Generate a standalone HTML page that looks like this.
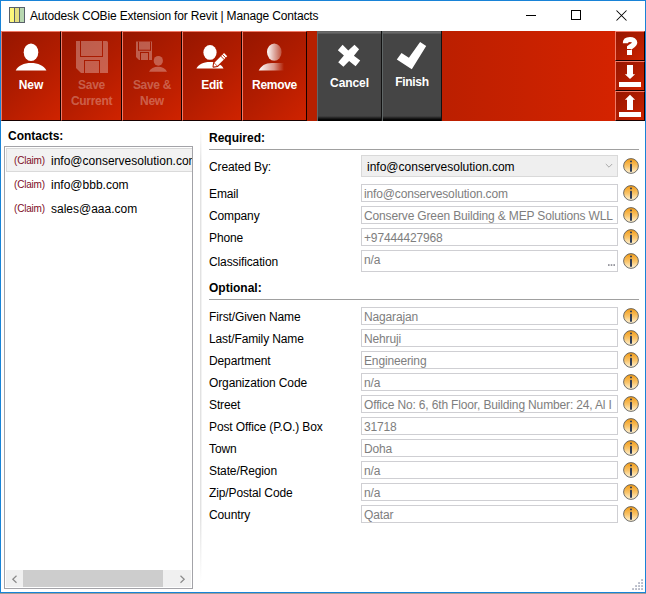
<!DOCTYPE html>
<html><head><meta charset="utf-8">
<style>
*{margin:0;padding:0;box-sizing:border-box}
html,body{width:646px;height:594px;overflow:hidden;background:#fff}
body{position:relative;font-family:"Liberation Sans",sans-serif;font-size:12px;color:#000}
.a{position:absolute}
.t{position:absolute;white-space:nowrap;line-height:16px;font-size:12px}
.b{font-weight:bold}
.rb{position:absolute;top:31px;height:90px;background:linear-gradient(135deg,#961600 0%,#b01c00 50%,#cf2300 100%);border-top:1px solid #f07a66;border-left:1px solid #f07a66;border-right:1px solid #160000;border-bottom:1px solid #160000}
.gb{position:absolute;top:31px;height:90px;background:linear-gradient(#5a5a5a 0px,#6a6a6a 1px,#6a6a6a 2px,#5a5a5a 2.5px,#454545 3.5px,#454545 85px,#202020 87px,#000 89px);border-left:1px solid #5f6666;border-right:1px solid #111}
.lbl{position:absolute;left:-2px;right:-2px;text-align:center;color:#fff;font-weight:bold;font-size:12px;line-height:16px;white-space:nowrap;letter-spacing:-0.3px}
.dis{color:rgba(255,255,255,0.3)}
.sb{position:absolute;left:615px;width:30px;height:30px;background:linear-gradient(135deg,#961600 0%,#b01c00 50%,#cf2300 100%);border-top:1px solid #f07a66;border-left:1px solid #f07a66;border-right:1px solid #160000;border-bottom:1px solid #160000}
.tb{position:absolute;left:361px;width:257px;height:18px;border:1px solid #cfcfd3;background:#fff;overflow:hidden}
.tv{position:absolute;left:2px;top:1px;line-height:16px;color:#7e7e7e;white-space:nowrap;font-size:12px;letter-spacing:-0.15px}
.lb{position:absolute;left:209px;white-space:nowrap;line-height:16px;font-size:12px;letter-spacing:-0.12px}
.inf{position:absolute;left:623px;width:16px;height:16px}
.li{position:absolute;left:0;height:24px;width:200px}
.cl{position:absolute;left:9px;color:#7e0e1e;font-size:10px;line-height:12px;white-space:nowrap;letter-spacing:-0.2px}
.em{position:absolute;left:46px;font-size:12px;line-height:16px;white-space:nowrap}
</style></head><body>
<svg width="0" height="0" style="position:absolute">
 <defs>
  <linearGradient id="ig" x1="0" y1="0" x2="0" y2="1">
   <stop offset="0" stop-color="#f39a12"/><stop offset="0.55" stop-color="#f9c66e"/><stop offset="1" stop-color="#fff6dc"/>
  </linearGradient>
  <linearGradient id="rg" x1="0" y1="0" x2="1" y2="0">
   <stop offset="0" stop-color="#fff" stop-opacity="1"/><stop offset="1" stop-color="#fff" stop-opacity="0.25"/>
  </linearGradient>
  <linearGradient id="rg2" x1="0" y1="0" x2="1" y2="0">
   <stop offset="0" stop-color="#fff" stop-opacity="1"/><stop offset="0.6" stop-color="#fff" stop-opacity="0.55"/><stop offset="1" stop-color="#fff" stop-opacity="0"/>
  </linearGradient>
  <symbol id="info" viewBox="0 0 16 16">
   <circle cx="8" cy="8" r="7.4" fill="url(#ig)" stroke="#5d5d5d" stroke-width="0.9"/>
   <rect x="7" y="2.6" width="2" height="1.8" rx="0.8" fill="#2e3b55"/>
   <rect x="7" y="5.7" width="2" height="8" rx="0.5" fill="#2e3b55"/>
  </symbol>
 </defs>
</svg>
<div class="a" style="left:0;top:0;width:646px;height:593px;border:1px solid #1883d7"></div>
<div class="a" style="left:0;top:593px;width:646px;height:1px;background:#a39d97"></div>

<!-- title bar -->
<svg class="a" style="left:9px;top:7px" width="16" height="16" viewBox="0 0 16 16">
  <rect x="0.5" y="0.5" width="15" height="15" fill="#fdf77a" stroke="#59606a"/>
  <rect x="5.5" y="0.5" width="5" height="15" fill="#e6df80" stroke="#59606a"/>
  <rect x="10.5" y="0.5" width="5" height="15" fill="#b8d8b0" stroke="#59606a"/>
</svg>
<div class="t" style="left:30px;top:8px;letter-spacing:-0.16px">Autodesk COBie Extension for Revit | Manage Contacts</div>
<div class="a" style="left:526px;top:15px;width:10px;height:1px;background:#000"></div>
<div class="a" style="left:571px;top:10px;width:10px;height:10px;border:1px solid #000"></div>
<svg class="a" style="left:616px;top:10px" width="11" height="11" viewBox="0 0 11 11"><path d="M0.5 0.5L10.5 10.5M10.5 0.5L0.5 10.5" stroke="#000" stroke-width="1.05"/></svg>

<!-- toolbar -->
<div class="a" style="left:1px;top:31px;width:644px;height:90px;background:linear-gradient(90deg,#bb1f00 0px,#bb1f00 440px,#d42300 614px)"></div>
<div class="a" style="left:307px;top:31px;width:10px;height:90px;background:#b52000"></div>

<div class="rb" style="left:1px;width:60px"><div class="lbl" style="top:45px;letter-spacing:0">New</div></div>
<div class="rb" style="left:61px;width:61px"><div class="lbl dis" style="top:45px">Save<br>Current</div></div>
<div class="rb" style="left:122px;width:60px"><div class="lbl dis" style="top:45px">Save &amp;<br>New</div></div>
<div class="rb" style="left:182px;width:60px"><div class="lbl" style="top:45px">Edit</div></div>
<div class="rb" style="left:242px;width:65px"><div class="lbl" style="top:45px">Remove</div></div>
<div class="gb" style="left:317px;width:65px"><div class="lbl" style="top:44px;letter-spacing:-0.1px">Cancel</div></div>
<div class="gb" style="left:382px;width:60px"><div class="lbl" style="top:43px">Finish</div></div>

<div class="sb" style="top:31px"></div>
<div class="sb" style="top:61px"></div>
<div class="sb" style="top:91px"></div>

<svg class="a" style="left:0;top:0" width="646" height="125" viewBox="0 0 646 125">
 <!-- New -->
 <ellipse cx="31" cy="52.2" rx="7.3" ry="8.8" fill="#fff"/>
 <path d="M15.7 70.5C18 65.5 24 63 31 63C38 63 44 65.5 46.4 70.5Z" fill="#fff"/>
 <!-- Save Current floppy -->
 <mask id="fm1" maskUnits="userSpaceOnUse" x="70" y="35" width="45" height="45">
  <path d="M76 41H106.5Q108 41 108 42.5V73H81L76 68Z" fill="#fff"/>
  <rect x="80" y="41" width="1" height="16" fill="#000"/>
  <rect x="102" y="41" width="1" height="16" fill="#000"/>
  <rect x="80" y="56" width="23" height="1" fill="#000"/>
  <rect x="84" y="60" width="1" height="13" fill="#000"/>
  <rect x="99" y="60" width="1" height="13" fill="#000"/>
  <rect x="84" y="60" width="16" height="1" fill="#000"/>
 </mask>
 <rect x="70" y="35" width="45" height="45" fill="#fff" fill-opacity="0.3" mask="url(#fm1)"/>
 <!-- Save & New -->
 <mask id="fm2" maskUnits="userSpaceOnUse" x="130" y="35" width="45" height="45">
  <path d="M136 41.6H152V60H139L136 57Z" fill="#fff"/>
  <rect x="138" y="41.6" width="1" height="8.9" fill="#000"/>
  <rect x="150" y="41.6" width="1" height="8.9" fill="#000"/>
  <rect x="138" y="49.7" width="13" height="1" fill="#000"/>
  <rect x="140" y="52" width="1" height="8" fill="#000"/>
  <rect x="148" y="52" width="1" height="8" fill="#000"/>
  <rect x="140" y="52" width="9" height="1" fill="#000"/>
 </mask>
 <rect x="130" y="35" width="45" height="45" fill="#fff" fill-opacity="0.3" mask="url(#fm2)"/>
 <ellipse cx="158.3" cy="60.8" rx="4.6" ry="4.9" fill="#fff" fill-opacity="0.3"/>
 <path d="M149 71.7C150.5 68.5 154 66.7 158 66.7C162 66.7 165.5 68.5 167 71.7Z" fill="#fff" fill-opacity="0.3"/>
 <!-- Edit -->
 <ellipse cx="210" cy="52.4" rx="6.6" ry="7.4" fill="#fff"/>
 <path d="M196.4 68.5C198.5 64.5 203 62 210 62C217 62 221.5 64.5 223.5 68.5Z" fill="#fff"/>
 <path d="M213.6 66.6 L214.17 62.92 L224.07 53.02 L227.18 56.13 L217.28 66.03Z" fill="none" stroke="#b31d00" stroke-width="2.2" stroke-linejoin="round"/>
 <path d="M213.6 66.6 L214.17 62.92 L224.07 53.02 L227.18 56.13 L217.28 66.03Z" fill="#fff"/>
 <path d="M220.67 55.99L224.21 59.53 M222.3 54.37L225.83 57.9" stroke="#b81e00" stroke-width="0.9"/>
 <path d="M214.17 62.92L217.28 66.03" stroke="#b51e00" stroke-width="0.7"/>
 <!-- Remove -->
 <ellipse cx="274.3" cy="52.1" rx="7.3" ry="8.7" fill="url(#rg)"/>
 <path d="M258.7 70.5C261 66 265 63 272 63H284V70.5Z" fill="url(#rg2)"/>
 <!-- Cancel X -->
 <path d="M342.6 44.8L348.25 50.6L354.5 44.8L359.1 49.2L353.9 55.7L360.2 60.6L355.6 66.3L349.1 60.9L343.4 66.8L338.2 62.2L343.9 55.4L337.85 50.3Z" fill="#fff"/>
 <!-- Finish check -->
 <path d="M401.5 53L408.9 57.7L420.1 42L426.2 45.9L411.8 69.2L396.8 59.5Z" fill="#fff"/>
 <!-- help ? -->
 <path d="M625.4 43.3C625.4 40.3 627.5 39.5 630 39.5C632.8 39.5 634.7 40.8 634.7 42.6C634.7 45 632 45.8 629.6 47.6V49" fill="none" stroke="#fff" stroke-width="5.2"/>
 <rect x="627" y="50" width="5" height="5" fill="#fff"/>
 <!-- download -->
 <path d="M627 65H633V74.2H635.1L630 79L624.9 74.2H627Z" fill="#fff"/>
 <rect x="619" y="82" width="22" height="5" fill="#fff"/>
 <!-- upload -->
 <path d="M630 94.8L635.1 99.8H633V110H627V99.8H624.9Z" fill="#fff"/>
 <rect x="619" y="112" width="22" height="5" fill="#fff"/>
</svg>

<!-- left panel -->
<div class="t b" style="left:8px;top:128px">Contacts:</div>
<div class="a" style="left:4px;top:146px;width:189px;height:443px;border:1px solid #a3a3a8;overflow:hidden">
 <div class="a" style="left:1px;top:1px;width:200px;height:24px;border:1px solid #dadada;background:#f2f2f2"></div>
 <div class="cl" style="top:8px">(Claim)</div><div class="em" style="top:6px">info@conservesolution.com</div>
 <div class="cl" style="top:32px">(Claim)</div><div class="em" style="top:30px">info@bbb.com</div>
 <div class="cl" style="top:56px">(Claim)</div><div class="em" style="top:54px">sales@aaa.com</div>
 <div class="a" style="left:1px;top:423px;width:185px;height:17px;background:#f0f0f0"></div>
 <div class="a" style="left:18px;top:423px;width:140px;height:17px;background:#cdcdcd"></div>
 <svg class="a" style="left:6px;top:428px" width="8" height="9" viewBox="0 0 8 9"><path d="M5.5 0.7L1.8 4.2L5.5 7.7" fill="none" stroke="#8a8a8a" stroke-width="1.2"/></svg>
 <svg class="a" style="left:174px;top:428px" width="8" height="9" viewBox="0 0 8 9"><path d="M1.5 0.7L5.2 4.2L1.5 7.7" fill="none" stroke="#8a8a8a" stroke-width="1.2"/></svg>
</div>
<div class="a" style="left:200px;top:128px;width:1px;height:455px;background:linear-gradient(#fff,#e2e2e2 8%,#e2e2e2 85%,#fff)"></div>
<div class="a" style="left:201px;top:128px;width:1px;height:455px;background:linear-gradient(#fff,#f2f2f2 8%,#f2f2f2 85%,#fff)"></div>

<!-- right panel -->
<div class="t b" style="left:209px;top:130px">Required:</div>
<div class="a" style="left:209px;top:149px;width:430px;height:1px;background:#a0a0a0"></div>
<div class="t b" style="left:209px;top:280px">Optional:</div>
<div class="a" style="left:209px;top:299px;width:430px;height:1px;background:#a0a0a0"></div>

<div class="lb" style="top:159px">Created By:</div>
<div class="a" style="left:361px;top:155px;width:257px;height:22px;border:1px solid #d9d9d9;background:#efefef"></div>
<div class="t" style="left:367px;top:159px">info@conservesolution.com</div>
<svg class="a" style="left:605px;top:163px" width="8" height="6" viewBox="0 0 8 6"><path d="M0.8 1L4 4.2L7.2 1" fill="none" stroke="#a8a8a8" stroke-width="1"/></svg>
<svg class="inf" style="top:158px" viewBox="0 0 16 16"><use href="#info"/></svg>
<div class="lb" style="top:186px">Email</div>
<div class="tb" style="top:184px;height:18px"><div class="tv">info@conservesolution.com</div></div>
<svg class="inf" style="top:185px" viewBox="0 0 16 16"><use href="#info"/></svg>
<div class="lb" style="top:208px">Company</div>
<div class="tb" style="top:206px;height:18px"><div class="tv">Conserve Green Building &amp; MEP Solutions WLL</div></div>
<svg class="inf" style="top:207px" viewBox="0 0 16 16"><use href="#info"/></svg>
<div class="lb" style="top:230px">Phone</div>
<div class="tb" style="top:228px;height:18px"><div class="tv">+97444427968</div></div>
<svg class="inf" style="top:229px" viewBox="0 0 16 16"><use href="#info"/></svg>
<div class="lb" style="top:254px">Classification</div>
<div class="tb" style="top:250px;height:22px"><div class="tv">n/a</div></div>
<svg class="inf" style="top:253px" viewBox="0 0 16 16"><use href="#info"/></svg>
<div class="lb" style="top:309px">First/Given Name</div>
<div class="tb" style="top:307px;height:18px"><div class="tv">Nagarajan</div></div>
<svg class="inf" style="top:308px" viewBox="0 0 16 16"><use href="#info"/></svg>
<div class="lb" style="top:331px">Last/Family Name</div>
<div class="tb" style="top:329px;height:18px"><div class="tv">Nehruji</div></div>
<svg class="inf" style="top:330px" viewBox="0 0 16 16"><use href="#info"/></svg>
<div class="lb" style="top:353px">Department</div>
<div class="tb" style="top:351px;height:18px"><div class="tv">Engineering</div></div>
<svg class="inf" style="top:352px" viewBox="0 0 16 16"><use href="#info"/></svg>
<div class="lb" style="top:375px">Organization Code</div>
<div class="tb" style="top:373px;height:18px"><div class="tv">n/a</div></div>
<svg class="inf" style="top:374px" viewBox="0 0 16 16"><use href="#info"/></svg>
<div class="lb" style="top:397px">Street</div>
<div class="tb" style="top:395px;height:18px"><div class="tv">Office No: 6, 6th Floor, Building Number: 24, Al I</div></div>
<svg class="inf" style="top:396px" viewBox="0 0 16 16"><use href="#info"/></svg>
<div class="lb" style="top:419px">Post Office (P.O.) Box</div>
<div class="tb" style="top:417px;height:18px"><div class="tv">31718</div></div>
<svg class="inf" style="top:418px" viewBox="0 0 16 16"><use href="#info"/></svg>
<div class="lb" style="top:441px">Town</div>
<div class="tb" style="top:439px;height:18px"><div class="tv">Doha</div></div>
<svg class="inf" style="top:440px" viewBox="0 0 16 16"><use href="#info"/></svg>
<div class="lb" style="top:463px">State/Region</div>
<div class="tb" style="top:461px;height:18px"><div class="tv">n/a</div></div>
<svg class="inf" style="top:462px" viewBox="0 0 16 16"><use href="#info"/></svg>
<div class="lb" style="top:485px">Zip/Postal Code</div>
<div class="tb" style="top:483px;height:18px"><div class="tv">n/a</div></div>
<svg class="inf" style="top:484px" viewBox="0 0 16 16"><use href="#info"/></svg>
<div class="lb" style="top:507px">Country</div>
<div class="tb" style="top:505px;height:18px"><div class="tv">Qatar</div></div>
<svg class="inf" style="top:506px" viewBox="0 0 16 16"><use href="#info"/></svg>
<svg class="a" style="left:606px;top:262px" width="10" height="6" viewBox="0 0 10 6" fill="#8c8c94"><rect x="2" y="2.2" width="1.6" height="1.7"/><rect x="4.7" y="2.2" width="1.6" height="1.7"/><rect x="7.4" y="2.2" width="1.6" height="1.7"/></svg>

<!-- resize grip -->
<svg class="a" style="left:630px;top:577px" width="14" height="14" viewBox="0 0 14 14" fill="#a7acbc"><rect x="11.2" y="2.2" width="1.7" height="1.7"/><rect x="11.2" y="5.2" width="1.7" height="1.7"/><rect x="8.2" y="5.2" width="1.7" height="1.7"/><rect x="11.2" y="8.2" width="1.7" height="1.7"/><rect x="8.2" y="8.2" width="1.7" height="1.7"/><rect x="5.2" y="8.2" width="1.7" height="1.7"/><rect x="11.2" y="11.2" width="1.7" height="1.7"/><rect x="8.2" y="11.2" width="1.7" height="1.7"/><rect x="5.2" y="11.2" width="1.7" height="1.7"/><rect x="2.2" y="11.2" width="1.7" height="1.7"/></svg>
</body></html>
